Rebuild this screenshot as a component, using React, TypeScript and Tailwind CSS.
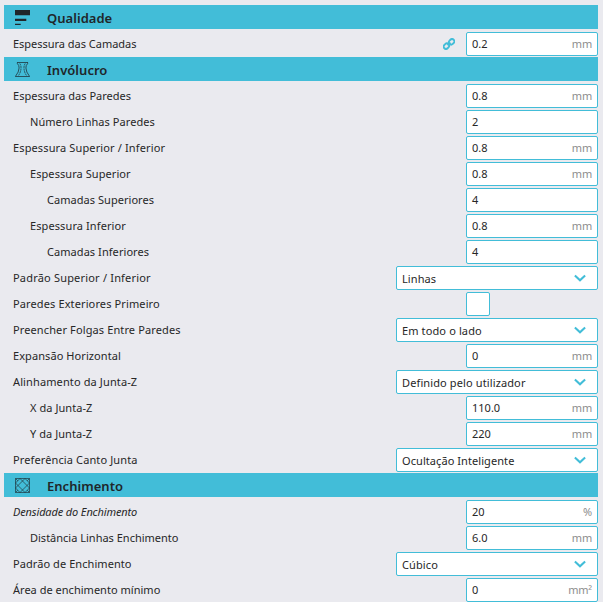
import React from "react";

type Row =
  | { kind: "header"; label: string; icon: "quality" | "shell" | "infill" }
  | { kind: "input"; label: string; value: string; unit?: string; level?: number; linked?: boolean; italic?: boolean; track?: string }
  | { kind: "select"; label: string; value: string; track?: string; valueTrack?: string }
  | { kind: "check"; label: string; track?: string };

const rows: Row[] = [
  { kind: "header", label: "Qualidade", icon: "quality" },
  { kind: "input", label: "Espessura das Camadas", value: "0.2", unit: "mm", linked: true, track: "tracking-[-0.02px]" },
  { kind: "header", label: "Invólucro", icon: "shell" },
  { kind: "input", label: "Espessura das Paredes", value: "0.8", unit: "mm", track: "tracking-[0.02px]" },
  { kind: "input", label: "Número Linhas Paredes", value: "2", level: 1, track: "tracking-[0.06px]" },
  { kind: "input", label: "Espessura Superior / Inferior", value: "0.8", unit: "mm", track: "tracking-[0.13px]" },
  { kind: "input", label: "Espessura Superior", value: "0.8", unit: "mm", level: 1, track: "tracking-[0.07px]" },
  { kind: "input", label: "Camadas Superiores", value: "4", level: 2, track: "tracking-[0.04px]" },
  { kind: "input", label: "Espessura Inferior", value: "0.8", unit: "mm", level: 1, track: "tracking-[0.1px]" },
  { kind: "input", label: "Camadas Inferiores", value: "4", level: 2, track: "tracking-[0.06px]" },
  { kind: "select", label: "Padrão Superior / Inferior", value: "Linhas", track: "tracking-[0.19px]", valueTrack: "tracking-[0.1px]" },
  { kind: "check", label: "Paredes Exteriores Primeiro", track: "tracking-[0.12px]" },
  { kind: "select", label: "Preencher Folgas Entre Paredes", value: "Em todo o lado", track: "tracking-[0.12px]", valueTrack: "tracking-[0.12px]" },
  { kind: "input", label: "Expansão Horizontal", value: "0", unit: "mm", track: "tracking-[0.08px]" },
  { kind: "select", label: "Alinhamento da Junta-Z", value: "Definido pelo utilizador", track: "tracking-[0.12px]", valueTrack: "tracking-[0.12px]" },
  { kind: "input", label: "X da Junta-Z", value: "110.0", unit: "mm", level: 1, track: "tracking-[0.06px]" },
  { kind: "input", label: "Y da Junta-Z", value: "220", unit: "mm", level: 1, track: "tracking-[0.06px]" },
  { kind: "select", label: "Preferência Canto Junta", value: "Ocultação Inteligente", track: "tracking-[0.12px]", valueTrack: "tracking-[0.07px]" },
  { kind: "header", label: "Enchimento", icon: "infill" },
  { kind: "input", label: "Densidade do Enchimento", value: "20", unit: "%", italic: true, track: "tracking-[-0.13px]" },
  { kind: "input", label: "Distância Linhas Enchimento", value: "6.0", unit: "mm", level: 1 },
  { kind: "select", label: "Padrão de Enchimento", value: "Cúbico", track: "tracking-[0.07px]", valueTrack: "tracking-[0.1px]" },
  { kind: "input", label: "Área de enchimento mínimo", value: "0", unit: "mm²", track: "tracking-[0.02px]" },
];

const indents = ["pl-[9px]", "pl-[26px]", "pl-[43px]"];

function SectionIcon({ name }: { name: "quality" | "shell" | "infill" }) {
  if (name === "quality") {
    return (
      <svg width="15" height="15" viewBox="0 0 15 15" fill="#20262a">
        <path d="M0 0h15v5.200H0zM0 8.700h11.300v2.200H0zM0 13.800h5.700v1.200H0z" />
      </svg>
    );
  }
  if (name === "shell") {
    return (
      <svg width="15" height="15" viewBox="0 0 15 15" fill="none" stroke="#20363f" strokeWidth="0.8">
        <path d="M2 0.500h11M0.200 14.500h14.600" />
        <path d="M2.400 0.500v1.200q1.800 1.300 1.700 4.300Q4 10 0.500 14.300M12.600 0.500v1.200q-1.800 1.300-1.700 4.300Q11 10 14.500 14.300" />
        <path d="M4.800 1.500Q6.200 3.500 6 6.500Q5.700 10.500 3.500 13.500M10.200 1.500Q8.800 3.500 9 6.500Q9.300 10.500 11.500 13.500" strokeDasharray="2 0.600" />
      </svg>
    );
  }
  return (
    <svg width="15" height="15" viewBox="0 0 15 15" fill="none" stroke="#20363f" strokeWidth="0.7">
      <path d="M0.500 0.500h14v14h-14z" />
      <path d="M0.500 5l4.500-4.500l9.500 9.500M10 0.500l-9.500 9.500M14.500 5l-4.500-4.500M0.500 5l9.500 9.500M0.500 10l4.500 4.500l9.500-9.500M10 14.500l4.500-4.500M0.500 0.500l2.300 2.300M14.500 0.500l-2.300 2.300M0.500 14.500l2.300-2.300M14.500 14.500l-2.300-2.300" />
    </svg>
  );
}

function LinkIcon() {
  return (
    <svg width="12" height="12" viewBox="0 0 12 12" fill="none" stroke="#42bdd8" strokeWidth="1.850">
      <rect x="0.500" y="5.900" width="5.800" height="4.600" rx="2.300" transform="rotate(-45 3.400 8.200)" />
      <rect x="5.700" y="1.500" width="5.800" height="4.600" rx="2.300" transform="rotate(-45 8.600 3.800)" />
      <path d="M4.500 7.300l3-2.700" />
    </svg>
  );
}

function Control({ row }: { row: Exclude<Row, { kind: "header" }> }) {
  if (row.kind === "check") {
    return <div className="mr-[108px] h-6 w-6 rounded-[2px] border border-[#42bdd8] bg-white" />;
  }
  if (row.kind === "select") {
    return (
      <div className="flex h-6 w-[202px] items-center justify-between rounded-[2px] border border-[#42bdd8] bg-white pr-[11px] pl-[5px]">
        <span className={`pt-[2px] ${row.valueTrack ?? ""}`}>{row.value}</span>
        <svg width="12" height="8" viewBox="0 0 12 8" fill="none" stroke="#42bdd8" strokeWidth="2.100">
          <path d="M0.900 1.500l5.100 4.700l5.100-4.700" />
        </svg>
      </div>
    );
  }
  return (
    <div className="flex h-6 w-[132px] items-center justify-between rounded-[2px] border border-[#42bdd8] bg-white pr-[5px] pl-[5px]">
      <span>{row.value}</span>
      <span className="tracking-[-0.2px] text-[#8d8d8d]">{row.unit}</span>
    </div>
  );
}

export default function App() {
  return (
    <main className="h-[602px] w-[603px] overflow-hidden bg-[#eaeaef] pt-[5px] pr-[5px] pl-1 font-['Noto_Sans',sans-serif] text-[11px] leading-4 text-[#272727]">
      {rows.map((row) =>
        row.kind === "header" ? (
          <div key={row.label} className="mb-[2px] flex h-6 items-center bg-[#42bdd8] pl-[11px] text-[13px] font-semibold tracking-[0.03px] text-[#20262a]">
            <span className="w-8 pt-px">
              <SectionIcon name={row.icon} />
            </span>
            <h2 className="pt-[2px]">{row.label}</h2>
          </div>
        ) : (
          <div key={row.label} className={`flex h-[26px] items-center pt-px pb-px ${indents[row.kind === "input" ? row.level ?? 0 : 0]}`}>
            <span className={`flex-1 ${row.track ?? ""} ${row.kind === "input" && row.italic ? "italic" : ""}`}>{row.label}</span>
            {row.kind === "input" && row.linked && (
              <span className="mr-[11px]">
                <LinkIcon />
              </span>
            )}
            <Control row={row} />
          </div>
        ),
      )}
    </main>
  );
}
